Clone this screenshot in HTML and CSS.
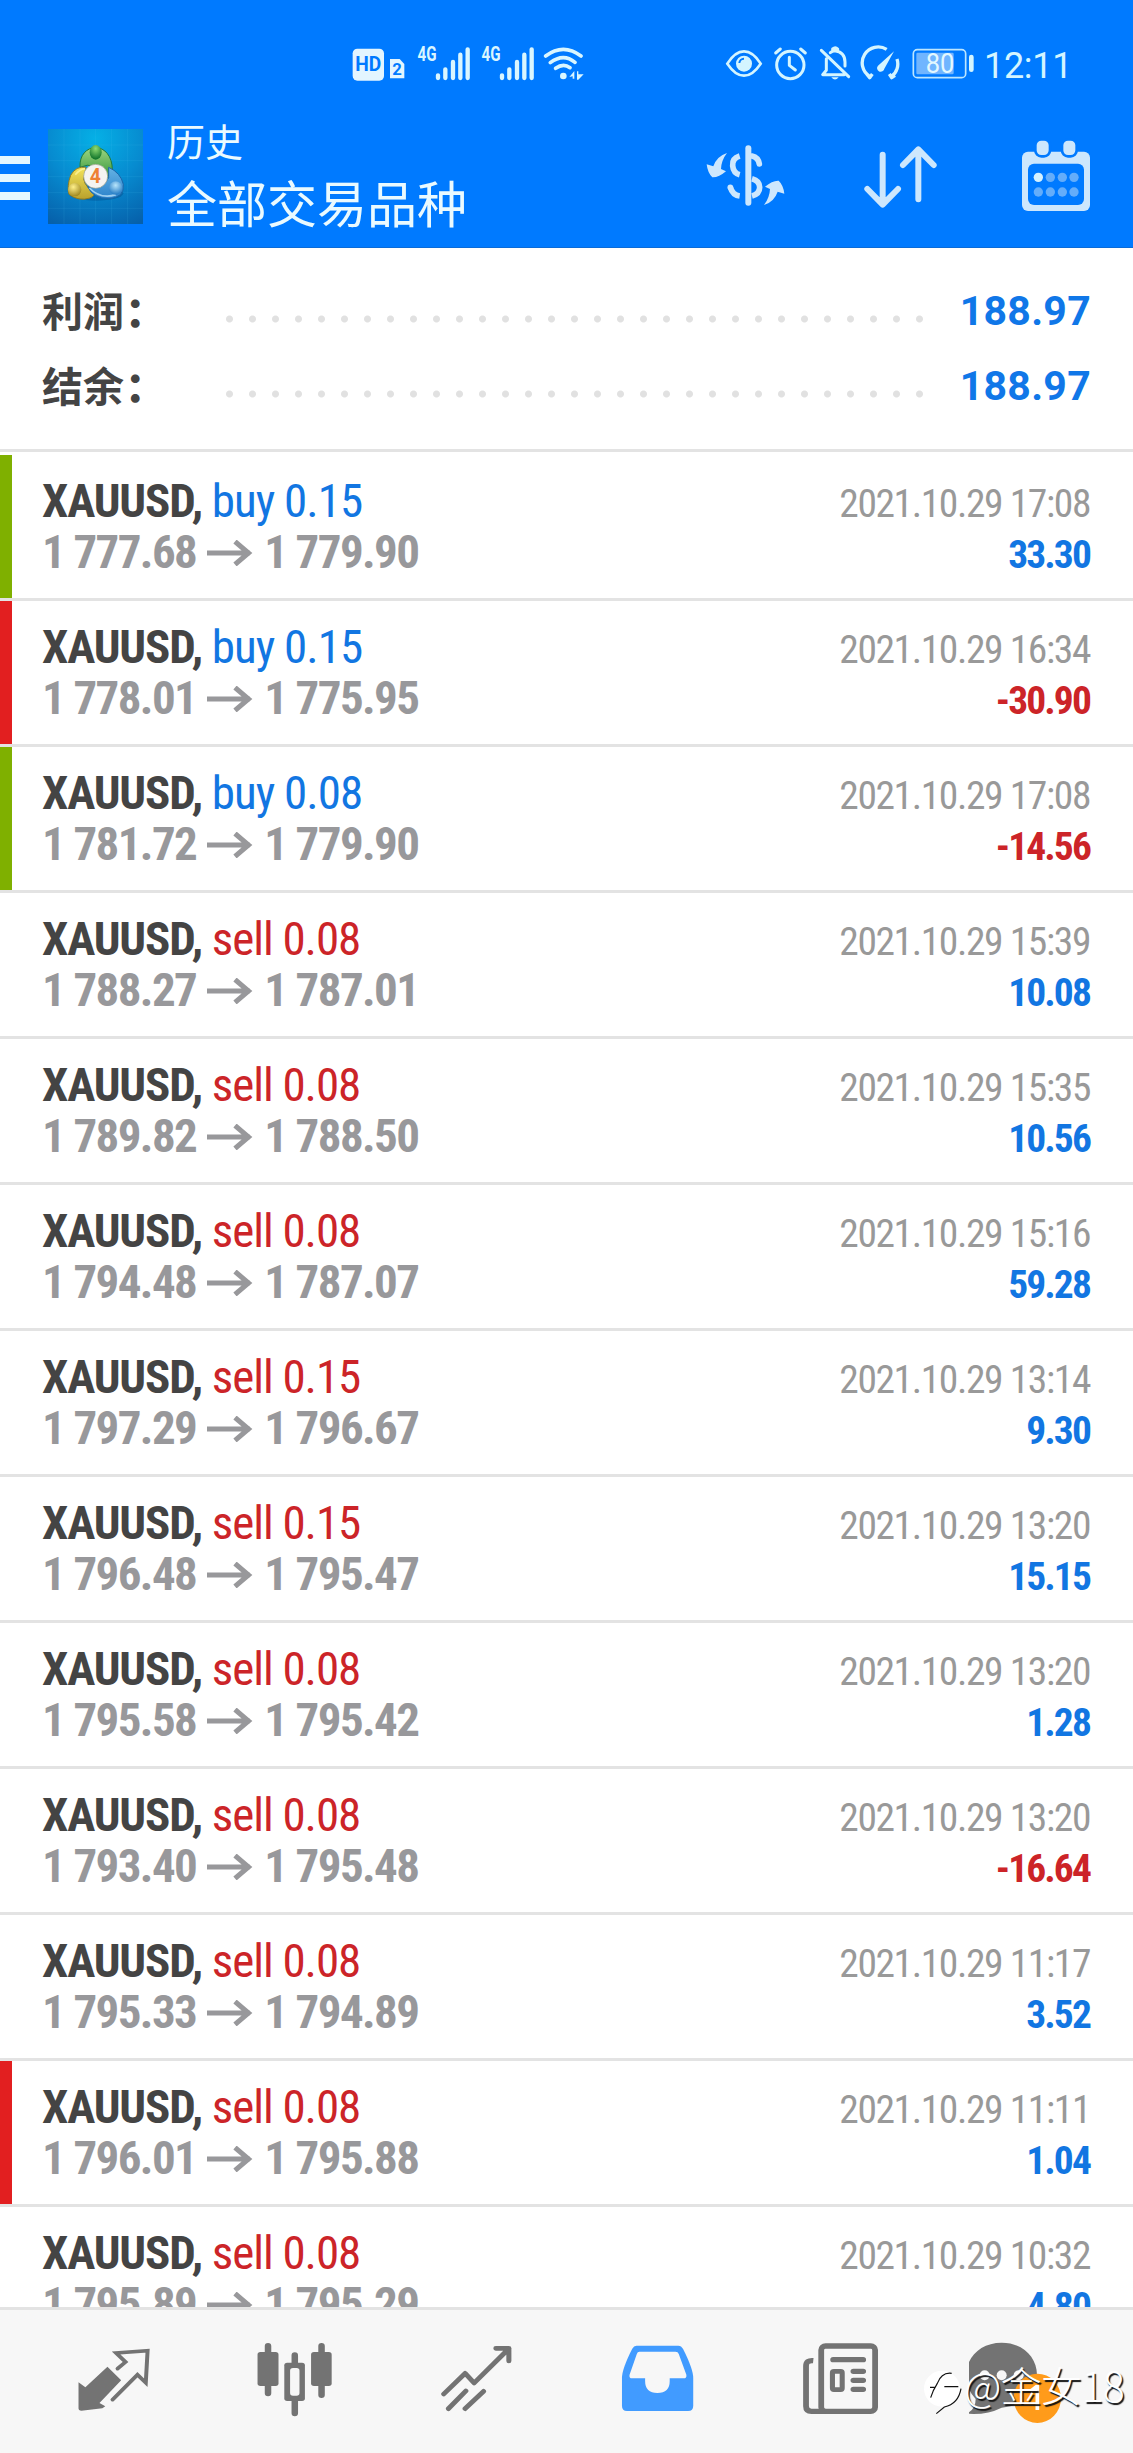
FILE: index.html
```html
<!DOCTYPE html>
<html lang="zh-CN">
<head>
<meta charset="utf-8">
<title>历史</title>
<link rel="stylesheet" href="styles.css">
</head>
<body>
<svg class="defs" width="0" height="0" aria-hidden="true">
  <symbol id="arrow" viewBox="0 0 46 26"><path d="M0 13H43M28 1.500L41.500 13L28 24.500" fill="none" stroke="currentColor" stroke-width="5"/></symbol>
  <symbol id="signal" viewBox="0 39 168 120"><g stroke="#d9f6ff" stroke-width="13" stroke-linecap="round"><path d="M66 136v8M88 118v26M111 96v48M133 74v70M155 58v86"/></g></symbol>
</svg>
<header class="header">
  <div class="status">
    <svg width="37" height="40" viewBox="60 39 111 120"><rect x="68" y="56" width="94" height="96" rx="14" fill="#e3f5ff"/><text x="115" y="124" class="hd" text-anchor="middle" textLength="78" lengthAdjust="spacingAndGlyphs">HD</text></svg>
    <svg width="19" height="40" viewBox="171 39 57 120"><path d="M180 87h29l14 15v43h-43z" fill="#e3f5ff"/><text x="201" y="136" class="sim" text-anchor="middle">2</text></svg>
    <div class="signal"><svg width="56" height="40"><use href="#signal"/><text x="1.500" y="17.500" class="gen" textLength="19" lengthAdjust="spacingAndGlyphs">4G</text></svg></div>
    <div class="signal second"><svg width="56" height="40"><use href="#signal"/><text x="1.500" y="17.500" class="gen" textLength="19" lengthAdjust="spacingAndGlyphs">4G</text></svg></div>
    <svg class="wifi" width="43" height="40" viewBox="636 39 129 120"><g fill="none" stroke="#d9f6ff" stroke-width="11" stroke-linecap="round"><path d="M647 78Q700 38 753 78M661 98Q700 68 735 97M677 115Q700 98 720 113"/></g><circle cx="700" cy="138" r="10" fill="#d9f6ff"/><path d="M718 141l15-18v23h-5v-7zM741 124h4v9h16l-16 16h-4z" fill="#d9f6ff"/></svg>
    <svg class="eye" width="40" height="40" viewBox="72 39 120 120"><path d="M82 101Q105 64 132 64T182 101Q158 137 132 137T82 101Z" fill="none" stroke="#d4f5ff" stroke-width="8"/><circle cx="132" cy="101" r="24" fill="#d4f5ff"/><path d="M118 99a14 14 0 0 1 14-13" fill="none" stroke="#007aff" stroke-width="6"/></svg>
    <svg class="alarm" width="37" height="40" viewBox="216 39 111 120"><g fill="none" stroke="#d4f5ff" stroke-width="9" stroke-linecap="round" stroke-linejoin="round"><circle cx="271" cy="105" r="41"/><path d="M227 69l14-12M302 57l14 12"/><path d="M268 82v24l18 14" stroke-width="9"/></g></svg>
    <svg class="bell" width="34" height="40" viewBox="354 39 102 120"><g fill="none" stroke="#d4f5ff" stroke-width="9" stroke-linecap="round" stroke-linejoin="round"><path d="M364 61l82 79M379 86v35l-11 13h64M391 68q6-5 13-6q31 4 31 34v12M398 61v-4q8-7 15 0v5"/></g><path d="M394 142h22q-11 13-22 0z" fill="#d4f5ff"/></svg>
    <svg class="gauge" width="42" height="40" viewBox="480 39 126 120"><path d="M509 139a47 47 0 0 1 51-81M591 87a47 47 0 0 1-17 53M500 132l9 11 8-11M568 132l7 11 10-7" fill="none" stroke="#d4f5ff" stroke-width="10" stroke-linejoin="round"/><path d="M582 64l-29 52a11 11 0 1 1-19-9z" fill="#d4f5ff"/></svg>
    <svg class="battery" width="65" height="40" viewBox="633 39 195 120"><rect x="640" y="59" width="157" height="84" rx="12" fill="none" stroke="#bce6ff" stroke-width="5"/><rect x="649" y="68" width="112" height="65" rx="4" fill="#70b5ff"/><rect x="807" y="74" width="14" height="52" rx="7" fill="#d4f5ff"/><text x="720" y="130" class="charge" text-anchor="middle" textLength="86" lengthAdjust="spacingAndGlyphs">80</text></svg>
    <span class="clock">12:11</span>
  </div>
  <div class="appbar">
    <svg class="menu" width="30" height="44" viewBox="0 0 30 44"><path d="M0 4h30M0 22h30M0 40h30" stroke="#e5f8ff" stroke-width="8"/></svg>
    <svg class="logo" width="95" height="95" viewBox="144 57 285 285">
      <defs>
        <radialGradient id="sky" cx=".5" cy=".1" r="1"><stop offset="0" stop-color="#05b0e6"/><stop offset=".5" stop-color="#078bd0"/><stop offset="1" stop-color="#0660aa"/></radialGradient>
        <linearGradient id="grn" x2="0" y2="1"><stop offset="0" stop-color="#9fd681"/><stop offset="1" stop-color="#34963b"/></linearGradient>
        <linearGradient id="yel" x2="0" y2="1"><stop offset="0" stop-color="#f3e45b"/><stop offset="1" stop-color="#b9a12c"/></linearGradient>
        <linearGradient id="blu" x2="0" y2="1"><stop offset="0" stop-color="#65b3e4"/><stop offset="1" stop-color="#2c82cb"/></linearGradient>
        <radialGradient id="ballg" cx=".5" cy=".25" r=".7"><stop offset="0" stop-color="#8fdb72"/><stop offset="1" stop-color="#13762c"/></radialGradient>
        <radialGradient id="bally" cx=".4" cy=".3" r=".7"><stop offset="0" stop-color="#fff08a"/><stop offset="1" stop-color="#a18a22"/></radialGradient>
        <radialGradient id="ballb" cx=".5" cy=".3" r=".7"><stop offset="0" stop-color="#b8e5fb"/><stop offset="1" stop-color="#2179c4"/></radialGradient>
      </defs>
      <rect x="144" y="57" width="285" height="285" fill="url(#sky)"/>
      <path d="M192 57v285M240 57v285M287 57v285M335 57v285M383 57v285M144 105h285M144 152h285M144 200h285M144 248h285M144 295h285" stroke="#4fc3ee" stroke-opacity=".2" stroke-width="2"/>
      <ellipse cx="288" cy="250" rx="82" ry="22" fill="#03437f" opacity=".35"/>
      <path d="M240 172C238 135 260 113 287 113S337 138 337 180L322 203Q285 150 240 172Z" fill="url(#grn)" stroke="#257b36" stroke-width="3"/>
      <path d="M258 172q-30-5-46 24q-12 32-5 57q28 22 63 11q15-6 15-22q-28-5-34-35Z" fill="url(#yel)" stroke="#8d7b25" stroke-width="3"/>
      <path d="M326 172q36 16 44 51q4 40-43 43q-48 0-64-36q44 13 63-27Z" fill="url(#blu)" stroke="#1b65a8" stroke-width="3"/>
      <path d="M268 234q34 35 80 20" fill="none" stroke="#cdeeff" stroke-width="5" opacity=".7"/>
      <path d="M226 194q13-16 29-18" fill="none" stroke="#fff8a7" stroke-width="5" opacity=".7"/>
      <ellipse cx="287" cy="127" rx="18" ry="22" fill="url(#ballg)"/>
      <circle cx="224" cy="239" r="20" fill="url(#bally)"/>
      <circle cx="347" cy="234" r="20" fill="url(#ballb)"/>
      <circle cx="287" cy="199" r="36" fill="#f5f4f1" stroke="#9aa08c" stroke-width="2"/>
      <text x="286" y="219" class="four" text-anchor="middle">4</text>
    </svg>
    <div class="titles"><div class="title-small">历史</div><div class="title-main">全部交易品种</div></div>
    <svg class="currency" width="86" height="90" viewBox="72 60 258 270"><g fill="none" stroke="#cde7fd" stroke-width="17"><path d="M205 112v163" stroke-linecap="round" stroke-width="18"/><path d="M179 135Q156 142 158 164Q160 186 179 191M151 229Q158 252 179 255"/><path d="M216 135Q235 139 238 159" stroke-linecap="round"/><path d="M216 203Q239 209 239 229T216 255"/></g><circle cx="151" cy="229" r="8.500" fill="#cde7fd"/><path d="M141 126Q110 136 100 166L80 160Q83 186 97 199Q116 200 138 181L123 174Q124 148 141 126ZM252 282Q283 272 293 242L313 248Q310 222 296 209Q277 208 255 227L270 234Q269 260 252 282Z" fill="#cde7fd"/></svg>
    <svg class="sort" width="80" height="90" viewBox="543 60 240 270"><path d="M608 131v149M562 234l46 47 46-47M715 265V116M669 162l46-47 46 47" fill="none" stroke="#cde7fd" stroke-width="18" stroke-linecap="round" stroke-linejoin="round"/></svg>
    <svg class="calendar" width="72" height="90" viewBox="1020 60 216 270"><rect x="1026" y="122" width="204" height="178" rx="18" fill="#cde7fd"/><rect x="1044" y="158" width="168" height="124" rx="18" fill="#007aff"/><g fill="#cde7fd" stroke="#007aff" stroke-width="8"><rect x="1066" y="85" width="44" height="51" rx="18"/><rect x="1146" y="85" width="44" height="51" rx="18"/></g><circle cx="1075" cy="199" r="14" fill="#d4f1ff"/><g fill="#64adfa"><circle cx="1111" cy="199" r="14"/><circle cx="1147" cy="199" r="14"/><circle cx="1182" cy="199" r="14"/><circle cx="1075" cy="243" r="14"/><circle cx="1111" cy="243" r="14"/><circle cx="1147" cy="243" r="14"/><circle cx="1182" cy="243" r="14"/></g></svg>
  </div>
</header>
<section class="summary">
  <div class="sum-row"><span class="sum-label">利润<span class="colon">：</span></span><span class="dots"></span><span class="sum-value">188.97</span></div>
  <div class="sum-row"><span class="sum-label">结余<span class="colon">：</span></span><span class="dots"></span><span class="sum-value">188.97</span></div>
</section>
<main class="deals">
  <article class="deal win"><div class="info"><div><b>XAUUSD,</b> <span class="buy">buy 0.15</span></div><div class="prices"><span>1 777.68</span><svg><use href="#arrow"/></svg><span>1 779.90</span></div></div><div class="result"><div>2021.10.29 17:08</div><div class="plus">33.30</div></div></article>
  <article class="deal loss"><div class="info"><div><b>XAUUSD,</b> <span class="buy">buy 0.15</span></div><div class="prices"><span>1 778.01</span><svg><use href="#arrow"/></svg><span>1 775.95</span></div></div><div class="result"><div>2021.10.29 16:34</div><div class="minus">-30.90</div></div></article>
  <article class="deal win"><div class="info"><div><b>XAUUSD,</b> <span class="buy">buy 0.08</span></div><div class="prices"><span>1 781.72</span><svg><use href="#arrow"/></svg><span>1 779.90</span></div></div><div class="result"><div>2021.10.29 17:08</div><div class="minus">-14.56</div></div></article>
  <article class="deal"><div class="info"><div><b>XAUUSD,</b> <span class="sell">sell 0.08</span></div><div class="prices"><span>1 788.27</span><svg><use href="#arrow"/></svg><span>1 787.01</span></div></div><div class="result"><div>2021.10.29 15:39</div><div class="plus">10.08</div></div></article>
  <article class="deal"><div class="info"><div><b>XAUUSD,</b> <span class="sell">sell 0.08</span></div><div class="prices"><span>1 789.82</span><svg><use href="#arrow"/></svg><span>1 788.50</span></div></div><div class="result"><div>2021.10.29 15:35</div><div class="plus">10.56</div></div></article>
  <article class="deal"><div class="info"><div><b>XAUUSD,</b> <span class="sell">sell 0.08</span></div><div class="prices"><span>1 794.48</span><svg><use href="#arrow"/></svg><span>1 787.07</span></div></div><div class="result"><div>2021.10.29 15:16</div><div class="plus">59.28</div></div></article>
  <article class="deal"><div class="info"><div><b>XAUUSD,</b> <span class="sell">sell 0.15</span></div><div class="prices"><span>1 797.29</span><svg><use href="#arrow"/></svg><span>1 796.67</span></div></div><div class="result"><div>2021.10.29 13:14</div><div class="plus">9.30</div></div></article>
  <article class="deal"><div class="info"><div><b>XAUUSD,</b> <span class="sell">sell 0.15</span></div><div class="prices"><span>1 796.48</span><svg><use href="#arrow"/></svg><span>1 795.47</span></div></div><div class="result"><div>2021.10.29 13:20</div><div class="plus">15.15</div></div></article>
  <article class="deal"><div class="info"><div><b>XAUUSD,</b> <span class="sell">sell 0.08</span></div><div class="prices"><span>1 795.58</span><svg><use href="#arrow"/></svg><span>1 795.42</span></div></div><div class="result"><div>2021.10.29 13:20</div><div class="plus">1.28</div></div></article>
  <article class="deal"><div class="info"><div><b>XAUUSD,</b> <span class="sell">sell 0.08</span></div><div class="prices"><span>1 793.40</span><svg><use href="#arrow"/></svg><span>1 795.48</span></div></div><div class="result"><div>2021.10.29 13:20</div><div class="minus">-16.64</div></div></article>
  <article class="deal"><div class="info"><div><b>XAUUSD,</b> <span class="sell">sell 0.08</span></div><div class="prices"><span>1 795.33</span><svg><use href="#arrow"/></svg><span>1 794.89</span></div></div><div class="result"><div>2021.10.29 11:17</div><div class="plus">3.52</div></div></article>
  <article class="deal loss"><div class="info"><div><b>XAUUSD,</b> <span class="sell">sell 0.08</span></div><div class="prices"><span>1 796.01</span><svg><use href="#arrow"/></svg><span>1 795.88</span></div></div><div class="result"><div>2021.10.29 11:11</div><div class="plus">1.04</div></div></article>
  <article class="deal"><div class="info"><div><b>XAUUSD,</b> <span class="sell">sell 0.08</span></div><div class="prices"><span>1 795.89</span><svg><use href="#arrow"/></svg><span>1 795.29</span></div></div><div class="result"><div>2021.10.29 10:32</div><div class="plus">4.80</div></div></article>
</main>
<nav class="tabs">
  <svg viewBox="193 399 300 282"><g transform="scale(1.085 1)"><path d="M298 500l38 41-60 68 16 10-8 6-58 7q-8 0-8-7v-78l19 15z" fill="#737373"/><path d="M326 506l22-20-26-27 87-7-5 96-23-24-69 75" fill="none" stroke="#737373" stroke-width="11" stroke-linecap="round"/></g></svg>
  <svg viewBox="736 399 300 282"><g transform="scale(1.085 1)"><path d="M742 438v142M890 438v147M816 466v30M816 600v40" stroke="#737373" stroke-width="18" stroke-linecap="round"/><g fill="#737373"><rect x="713" y="456" width="58" height="102" rx="8"/><rect x="861" y="456" width="57" height="102" rx="8"/><rect x="787" y="488" width="57" height="115" rx="8"/></g><rect x="803" y="504" width="26" height="83" rx="8" fill="#f7f7f7"/></g></svg>
  <svg viewBox="1278 399 300 282"><g transform="scale(1.085 1)" fill="none" stroke="#737373" stroke-width="14" stroke-linecap="round" stroke-linejoin="round"><path d="M1227 582l59-62 25 29 96-103M1240 626l48-53M1286 626l51-52M1371 445h36v38"/></g></svg>
  <svg viewBox="120 399 300 282"><g transform="scale(1.085 1)"><path d="M192 437h116q8 0 13 10 28 60 28 87v83q0 16-14 16H166q-14 0-14-16v-83q0-27 28-87 5-10 12-10z" fill="#419bff"/><path d="M200 455h100q7 0 9 7l21 62q2 11-8 11h-38v9q0 35-34 35t-34-35v-9h-36q-9 0-7-11l20-62q2-7 7-7z" fill="#f7f7f7"/></g></svg>
  <svg viewBox="662 399 300 282"><g transform="scale(1.085 1)"><rect x="702" y="438" width="149" height="196" rx="12" fill="none" stroke="#737373" stroke-width="16"/><path d="M680 482q-20-2-20 16v121q0 15 15 15h38" fill="none" stroke="#737373" stroke-width="16"/><path d="M735 479h83M791 514h27M791 541h27M791 568h27" stroke="#737373" stroke-width="16" stroke-linecap="round"/><rect x="733" y="514" width="27" height="55" rx="4" fill="none" stroke="#737373" stroke-width="14"/></g></svg>
  <svg viewBox="1205 399 300 282"><g transform="translate(999 360)"><path d="M304 68C366 68 410 110 410 165S366 258 304 263Q258 286 199 281Q226 268 226 237Q198 208 198 165C198 110 242 68 304 68Z" fill="#737373"/><g fill="#f7f7f7"><circle cx="253" cy="166" r="15"/><circle cx="304" cy="166" r="15"/><circle cx="355" cy="166" r="15"/></g><ellipse cx="411" cy="235" rx="71" ry="74" fill="#ff9b1a"/><path d="M411 195v75M392 213l19-15" stroke="#fff" stroke-width="11"/></g></svg>
</nav>
<div class="watermark"><svg width="43" height="48" viewBox="63 145 129 144"><circle cx="126" cy="207" r="54" fill="#fff"/><path d="M155 161q-30-4-43 30-13 20-20 43M90 203h16M133 201h42M183 207q-8 46-50 55l-24 20" fill="none" stroke="#111" stroke-width="3.500"/></svg><span class="handle">@金女18</span></div>
</body>
</html>
```
FILE: styles.css
```css
* { box-sizing: border-box; }
body {
  margin: 0;
  width: 1133px;
  height: 2453px;
  display: flex;
  flex-direction: column;
  position: relative;
  overflow: hidden;
  background: #fff;
  font-family: Roboto, "Noto Sans CJK SC", sans-serif;
}
svg { display: block; flex: none; }
.defs { position: absolute; }

.header {
  flex: none;
  height: 248px;
  padding-top: 43px;
  background: #007aff;
  border-bottom: 1px solid #0a6bd8;
}
.status { display: flex; height: 40px; padding-left: 350px; }
.hd { font: 700 62px Roboto, sans-serif; fill: #007aff; }
.sim { font: 700 50px Roboto, sans-serif; fill: #007aff; }
.gen { font: 700 20px Roboto, sans-serif; fill: #d9f6ff; }
.charge { font: 400 82px Roboto, sans-serif; fill: #e3f8ff; }
.four { font: 700 58px Roboto, sans-serif; fill: #ee8134; }
.signal { margin-left: 10px; }
.signal.second { margin-left: 8px; }
.wifi { margin-left: 6px; }
.eye { margin-left: 139px; }
.alarm { margin-left: 8px; }
.bell { margin-left: 9px; }
.gauge { margin-left: 8px; }
.battery { margin-left: 9px; }
.clock { margin-left: 8px; font-size: 36px; line-height: 46px; letter-spacing: -0.3px; color: #d4f5ff; }

.appbar { display: flex; align-items: center; height: 145px; margin-top: 20px; }
.menu { margin-top: 5px; }
.logo { margin: 2px 0 0 18px; }
.titles { margin: 1px 0 0 24px; width: 537px; color: #eafaff; font-family: "Noto Sans CJK SC", sans-serif; }
.title-small { font-size: 38px; line-height: 50px; }
.title-main { font-size: 50px; line-height: 72px; }
.sort { margin-left: 71px; }
.calendar { margin-left: 79px; }

.summary {
  flex: none;
  height: 204px;
  padding: 26px 43px 0 42px;
  border-bottom: 3px solid #e3e3e3;
}
.sum-row { display: flex; height: 75px; align-items: center; }
.sum-label { width: 176px; margin-top: -4px; font: 700 41px/75px "Noto Sans CJK SC", sans-serif; color: #444; white-space: nowrap; }
.colon { margin-left: 1px; font-weight: 900; }
.dots {
  width: 713px;
  height: 8px;
  margin-top: 15px;
  background: radial-gradient(circle at center, #e1e1e1 3px, transparent 4px) 0 0 / 23px 8px;
}
.sum-value { flex: 1; text-align: right; font-size: 41px; font-weight: 700; letter-spacing: 0.3px; color: #1077e8; margin: -1px -1px 0 0; }

.deals { flex: none; height: 1855px; padding-top: 3px; overflow: hidden; font-stretch: 75%; font-family: "Roboto Condensed", Roboto, sans-serif; }
.deal {
  display: flex;
  justify-content: space-between;
  height: 146px;
  padding: 0 43px 0 42px;
  border-bottom: 3px solid #e3e3e3;
}
.win { box-shadow: inset 12px 0 #7fb000; }
.loss { box-shadow: inset 12px 0 #e21f20; }
.info { padding-top: 20px; font-size: 47px; line-height: 51px; letter-spacing: -1.15px; color: #444; white-space: nowrap; }
.buy { color: #1276e2; letter-spacing: -1px; }
.sell { color: #cc2428; letter-spacing: -1.05px; }
.prices { display: flex; letter-spacing: -1.6px; color: #98989b; font-weight: 700; }
.prices svg { width: 46px; height: 26px; margin: 14px 11px 0 11px; }
.result { padding-top: 23px; font-size: 39.500px; line-height: 51px; letter-spacing: -1.4px; text-align: right; color: #999; white-space: nowrap; }
.plus, .minus { font-weight: 700; letter-spacing: -1.9px; color: #1276e2; }
.minus { color: #cc2428; }

.tabs {
  flex: none;
  height: 146px;
  padding: 23px 24px 0;
  display: grid;
  grid-template-columns: repeat(6, 1fr);
  justify-items: center;
  background: #f7f7f7;
  border-top: 3px solid #e3e3e3;
}
.tabs svg { width: 100px; height: 94px; }
.watermark {
  position: absolute;
  left: 921px;
  top: 2368px;
  display: flex;
  align-items: center;
  height: 48px;
  font: 300 41px "Noto Sans CJK SC", sans-serif;
  letter-spacing: -0.6px;
  color: #fff;
  text-shadow: 1.500px 1.500px 1px #111;
  white-space: nowrap;
}
.handle { margin-top: -16px; }
```
